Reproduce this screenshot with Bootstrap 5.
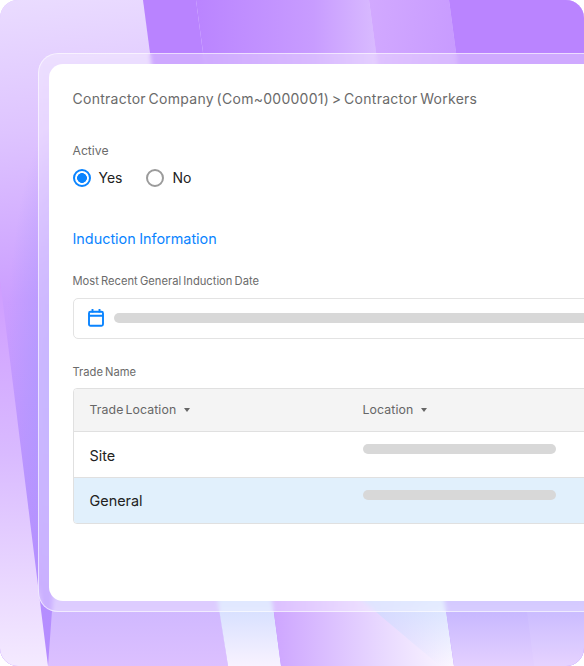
<!DOCTYPE html>
<html lang="en"><head><meta charset="utf-8"><title>Contractor Workers</title>
<link href="https://cdn.jsdelivr.net/npm/bootstrap@5.3.0/dist/css/bootstrap.min.css" rel="stylesheet">
<style>
html,body{margin:0;background:#fff;width:584px;height:666px;overflow:hidden}
body{font-family:Inter,"Liberation Sans",sans-serif}
.stage{width:584px;height:666px;border-radius:18px;overflow:hidden;position:relative;padding:53px 0 0 38px;background:#d9bdff}
.bands{position:absolute;inset:0;width:584px;height:666px}
.glass{position:relative;width:560px;height:559px;padding:9.5px;border:1.5px solid rgba(255,255,255,.6);border-right-width:0;border-radius:20px 0 0 20px;background:rgba(255,255,255,.3);backdrop-filter:blur(2px)}
.sheet{width:600px;height:537px;background:#fff;border-radius:14px;padding:24px 24px 0}
.crumb{font-size:14px;line-height:22px;color:#6a6a6a;margin:0 0 33px;letter-spacing:.27px;word-spacing:-1.5px}
.active-label{font-size:12.2px;line-height:16px;color:#6b6b6b;margin-bottom:10px}
.choice{font-size:14px;line-height:18px;color:#222;margin:0;padding:0;min-height:0}
.choice .form-check-input{width:18px;height:18px;margin:0;float:none;border:2px solid #9b9b9b;flex:none}
.choice .form-check-input:checked{border-color:#0a84ff;background:radial-gradient(circle,#0a84ff 0 4.6px,#fff 5.2px)}
.choice-row{gap:24px}
.head-blue{font-size:14.4px;line-height:20px;font-weight:400;color:#0a84ff;margin:42px 0 24px;word-spacing:-.6px}
.mini-label{font-size:11.2px;line-height:16px;color:#6b6b6b;margin-bottom:9px;word-spacing:-1px}
.mini-label-tight{margin-bottom:8px}
.date-box{height:41px;width:560px;border:1.5px solid #e3e3e3;border-radius:5px;padding:0 14px;margin-bottom:25px;gap:10px}
.date-box svg{flex:none}
.skel{height:10px;background:#d8d8d8;border-radius:5px}
.skel-long{width:520px}
.skel-cell{width:193px;margin-top:-1px}
.grid-wrap{width:560px;border:1px solid #e0e0e0;border-radius:4px 0 0 4px;overflow:hidden}
.grid-wrap table{table-layout:fixed;width:100%;margin:0;--bs-table-bg:transparent}
.grid-wrap th{background:#f4f4f4;height:43px;font-size:12.3px;font-weight:400;color:#666;padding:1px 16px 0;vertical-align:middle;border-bottom:1px solid #e0e0e0;letter-spacing:.1px;word-spacing:-1.6px}
.grid-wrap td{height:46px;font-size:14.4px;color:#222;padding:2px 16px 0;vertical-align:middle;border-bottom:1px solid #e0e0e0}
.grid-wrap tr:last-child td{border-bottom:0;height:45px;background:#e1f0fc}
.cell-top{vertical-align:top!important;padding-top:13px!important}
.tri{display:inline-block;width:0;height:0;border:3.5px solid transparent;border-top:4px solid #666;border-bottom:0;margin-left:8px;vertical-align:2px}
</style></head><body>
<div class="stage">
<svg class="bands" viewBox="0 0 584 666" aria-hidden="true">
<defs>
<linearGradient id="a" gradientUnits="userSpaceOnUse" x1="0" y1="0" x2="60" y2="600"><stop offset="0" stop-color="#eadcff"/><stop offset=".22" stop-color="#dec4ff"/><stop offset=".5" stop-color="#cb9eff"/><stop offset="1" stop-color="#b68cff"/></linearGradient>
<radialGradient id="tint" gradientUnits="userSpaceOnUse" cx="0" cy="0" r="1" gradientTransform="translate(60 390) scale(55 270)"><stop offset="0" stop-color="#a898ff" stop-opacity=".9"/><stop offset="1" stop-color="#a898ff" stop-opacity="0"/></radialGradient>
<linearGradient id="c" x1="0" y1="0" x2="1" y2="0"><stop offset="0" stop-color="#ba84ff"/><stop offset=".5" stop-color="#c89cff"/><stop offset="1" stop-color="#e8d6ff"/></linearGradient>
<linearGradient id="e" x1="0" y1="0" x2="1" y2=".4"><stop offset="0" stop-color="#d2a9ff"/><stop offset="1" stop-color="#c090ff"/></linearGradient>
<linearGradient id="l" x1="0" y1="0" x2="0" y2="1"><stop offset="0" stop-color="#cf9dff"/><stop offset=".45" stop-color="#d9baff"/><stop offset="1" stop-color="#f4eaff"/></linearGradient>
<linearGradient id="f" x1="0" y1="0" x2="0" y2="1"><stop offset="0" stop-color="#b8a8ff"/><stop offset="1" stop-color="#dcc0ff"/></linearGradient>
<linearGradient id="g" x1="0" y1="0" x2="0" y2="1"><stop offset="0" stop-color="#ccdaff"/><stop offset="1" stop-color="#f8f2ff"/></linearGradient>
<linearGradient id="h" x1="0" y1="0" x2="1" y2="0"><stop offset="0" stop-color="#cda4ff"/><stop offset=".6" stop-color="#e8d8ff"/><stop offset="1" stop-color="#fbf7ff"/></linearGradient>
<linearGradient id="hb" x1="0" y1="0" x2="0" y2="1"><stop offset="0" stop-color="#c8dcff" stop-opacity=".8"/><stop offset="1" stop-color="#c8dcff" stop-opacity="0"/></linearGradient>
<linearGradient id="i" x1="0" y1="0" x2="0" y2="1"><stop offset="0" stop-color="#bcaeff"/><stop offset="1" stop-color="#e4d0ff"/></linearGradient>
</defs>
<rect width="584" height="666" fill="url(#a)"/>
<rect y="100" width="130" height="580" fill="url(#tint)"/>
<polygon points="143,0 196,0 258,470 205,470" fill="#b983ff"/>
<polygon points="196,0 369,0 432,470 259,470" fill="url(#c)"/>
<polygon points="369,0 449,0 512,470 432,470" fill="url(#e)"/>
<polygon points="449,0 584,0 584,300 489,300" fill="#ba84ff"/>
<polygon points="60,500 205,500 220,612 228,666 48,666" fill="url(#f)"/>
<polygon points="0,280 48,666 0,666" fill="url(#l)"/>
<polygon points="216,590 271,590 281,666 228,666" fill="url(#g)"/>
<polygon points="271,590 443,590 454,666 281,666" fill="url(#h)"/>
<polygon points="350,590 443,590 454,666 440,666" fill="url(#hb)"/>
<polygon points="443,590 584,590 584,666 454,666" fill="url(#i)"/>
<polygon points="527,612 584,612 584,666 534,666" fill="#fff" opacity=".07"/>
</svg>
<div class="glass">
<div class="sheet">
<p class="crumb">Contractor Company (Com~0000001) &gt; Contractor Workers</p>
<div class="active-label">Active</div>
<div class="d-flex choice-row">
<label class="form-check choice d-flex align-items-center gap-2"><input class="form-check-input" type="radio" name="act" checked>Yes</label>
<label class="form-check choice d-flex align-items-center gap-2"><input class="form-check-input" type="radio" name="act">No</label>
</div>
<h2 class="head-blue">Induction Information</h2>
<div class="mini-label">Most Recent General Induction Date</div>
<div class="date-box d-flex align-items-center">
<svg width="16" height="18" viewBox="0 0 16 18" fill="none" stroke="#0a84ff" stroke-width="1.9"><rect x="1" y="2.8" width="14" height="14" rx="1.5"/><path d="M1 6.8h14M4.5 0v3.5M11.5 0v3.5"/></svg>
<div class="skel skel-long"></div>
</div>
<div class="mini-label mini-label-tight">Trade Name</div>
<div class="grid-wrap">
<table class="table">
<thead><tr><th style="width:273px">Trade Location<span class="tri"></span></th><th>Location<span class="tri"></span></th></tr></thead>
<tbody>
<tr><td>Site</td><td class="cell-top"><div class="skel skel-cell"></div></td></tr>
<tr><td>General</td><td class="cell-top"><div class="skel skel-cell"></div></td></tr>
</tbody></table>
</div>
</div></div></div>
</body></html>
